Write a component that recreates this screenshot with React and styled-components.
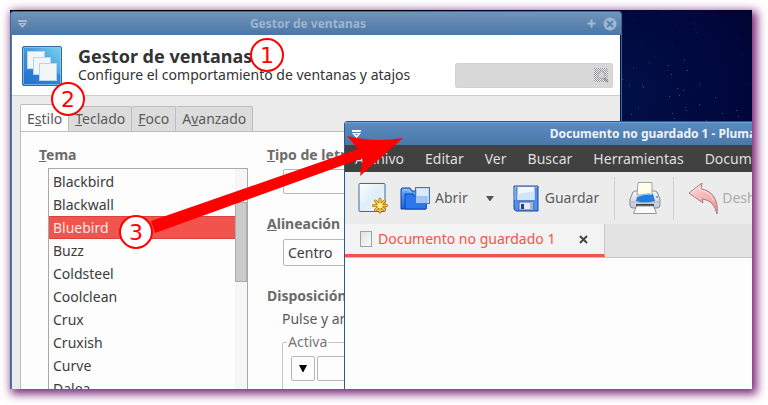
import React from "react";
import styled, { createGlobalStyle, css } from "styled-components";

const GlobalStyle = createGlobalStyle`
  *, *::before, *::after { box-sizing: border-box; }
  body {
    margin: 0;
    background: #fff;
    font-family: "Noto Sans", "Open Sans", sans-serif;
    font-size: 14px;
    line-height: 18px;
    color: #3c3c3c;
  }
  button, input { font: inherit; color: inherit; margin: 0; }
  h1, h2, p, ul { margin: 0; padding: 0; }
`;

/* ---------- Desktop ---------- */

const Page = styled.main`
  height: 100vh;
  padding: 10px 16px 16px 10px;
  overflow: hidden;
`;

const Desktop = styled.div`
  position: relative;
  height: 100%;
  overflow: hidden;
  background: radial-gradient(ellipse 260px 240px at 82% 22%, #001048 0%, #00063a 50%, #000020 80%, #000008 100%);
`;

const Shadow = styled.div`
  height: 100%;
  box-shadow: 3px 3px 9px 2px #7f2878;
`;

const Stars = styled.svg`
  position: absolute;
  top: 0;
  right: 0;
`;

const Annotations = styled.svg`
  position: absolute;
  inset: 0;
  width: 100%;
  height: 100%;
  pointer-events: none;
  font-family: "DejaVu Sans", sans-serif;
  font-size: 22px;
`;

/* ---------- Windows ---------- */

const Window = styled.section`
  position: absolute;
  display: flex;
  flex-direction: column;
  height: 460px;
  border: 1px solid #285a8e;
  border-radius: 3px 3px 0 0;
  overflow: hidden;
`;

const ManagerWindow = styled(Window)`
  top: 1px;
  left: 0;
  width: 612px;
  border-color: #3c6a9a;
  box-shadow: inset 1px 0 #4a7aad;
`;

const EditorWindow = styled(Window)`
  top: 111px;
  left: 334px;
  width: 634px;
  background: #fdfdfd;
`;

const TitleBar = styled.header`
  display: grid;
  grid-template-columns: 40px 1fr 58px;
  align-items: center;
  flex: none;
  height: 23px;
  padding: 0 4px 0 6px;
  font-size: 12px;
  font-weight: 700;
  text-align: center;
  ${({ $active }) =>
    $active
      ? css`
          color: #eef3f8;
          background: linear-gradient(#5a8bbf, #4a78a8);
          border-top: 1px solid #6ca2dc;
        `
      : css`
          color: #9db5cf;
          background: linear-gradient(#7294b9, #4a77a6);
        `}
`;

const WindowButtons = styled.div`
  display: flex;
  align-items: center;
  gap: 7px;
  justify-content: ${({ $end }) => ($end ? "flex-end" : "flex-start")};
`;

const IconButton = styled.button`
  display: inline-flex;
  align-items: center;
  justify-content: center;
  padding: 0;
  border: 0;
  background: none;
`;

const Heading = styled.div`
  display: flex;
  align-items: flex-start;
  flex: none;
  height: 61px;
  padding: 11px 7px 0 10px;
  margin: 0 1px;
  background: #fff;
  border-bottom: 1px solid #cdcdcd;
`;

const HeadingText = styled.div`
  flex: 1;
  padding-left: 16px;
  color: #333;
`;

const HeadingTitle = styled.h1`
  font-size: 18px;
  line-height: 20px;
`;

const SearchField = styled.label`
  display: flex;
  align-items: center;
  width: 158px;
  height: 25px;
  margin-top: 17px;
  padding: 0 3px;
  background: #d8d8d8;
  border: 1px solid #d2d2d2;
  border-radius: 2px;

  input {
    flex: 1;
    min-width: 0;
    border: 0;
    background: none;
    outline: none;
  }
`;

const Notebook = styled.div`
  display: flex;
  flex-direction: column;
  flex: 1;
  min-height: 0;
  margin: 0 1px;
  padding: 8px 8px 0;
  background: #ebebeb;
`;

const Tabs = styled.div`
  display: flex;
  align-items: flex-end;
`;

const Tab = styled.button`
  height: ${({ $selected }) => ($selected ? "28px" : "25px")};
  margin-bottom: ${({ $selected }) => ($selected ? "-1px" : "0")};
  padding: 0 6px;
  white-space: nowrap;
  color: #5a5a5a;
  background: ${({ $selected }) => ($selected ? "#fdfdfd" : "#dcdcdc")};
  border: 1px solid #bdbdbd;
  border-left-width: ${({ $first }) => ($first ? "1px" : "0")};
  border-bottom: 0;
  border-radius: 2px 2px 0 0;
`;

const TabPanel = styled.div`
  display: grid;
  grid-template-columns: 209px 1fr;
  gap: 19px;
  flex: 1;
  min-height: 0;
  padding: 13px 18px 0;
  background: #fdfdfd;
  border: 1px solid #bdbdbd;
`;

const Column = styled.div`
  display: flex;
  flex-direction: column;
  min-width: 0;
`;

const SectionTitle = styled.h2`
  font-size: 14px;
  line-height: 20px;
  color: #6b6b6b;
  white-space: nowrap;
`;

const ListBox = styled.div`
  display: flex;
  height: 300px;
  margin: 3px 0 0 9px;
  background: #fdfdfd;
  border: 1px solid #a9a9a9;
`;

const ThemeList = styled.ul`
  flex: 1;
  padding-top: 1px;
  list-style: none;
`;

const ThemeItem = styled.button`
  display: block;
  width: 100%;
  height: 23px;
  padding: 0 4px;
  text-align: left;
  border: solid ${({ $selected }) => ($selected ? "#d9423d" : "transparent")};
  border-width: 1px 0;
  line-height: 20px;
  color: ${({ $selected }) => ($selected ? "#fbe6e5" : "#3c3c3c")};
  background: ${({ $selected }) => ($selected ? "#f0544c" : "transparent")};
`;

const ScrollTrack = styled.div`
  width: 12px;
  padding-top: 33px;
  background: #f6f6f6;
`;

const ScrollThumb = styled.div`
  height: 80px;
  background: #cbcbcb;
  border: 1px solid #ababab;
`;

const Picker = styled.button`
  display: block;
  height: ${({ $tall }) => ($tall ? "27px" : "25px")};
  margin: ${({ $tall }) => ($tall ? "5px 0 20px 16px" : "4px 0 20px 16px")};
  padding: 0 4px;
  text-align: left;
  background: #fdfdfd;
  border: 1px solid #b7b7b7;
  border-radius: 2px;
`;

const Hint = styled.p`
  padding: 4px 0 0 15px;
  line-height: 18px;
  color: #5a5a5a;
`;

const ButtonLayout = styled.fieldset`
  display: flex;
  gap: 2px;
  height: 90px;
  margin: 5px 0 0 15px;
  padding: 5px 8px;
  color: #777;
  border: 1px solid #c4c4c4;
  border-radius: 2px;

  legend { padding: 0 1px; margin-left: -4px; }
`;

const LayoutButton = styled.button`
  display: flex;
  align-items: center;
  justify-content: center;
  width: ${({ $wide }) => ($wide ? "120px" : "24px")};
  height: 25px;
  padding: 0;
  background: #fdfdfd;
  border: 1px solid #b7b7b7;
  border-radius: 2px;
`;

const MenuBar = styled.nav`
  display: flex;
  gap: 21px;
  align-items: center;
  flex: none;
  height: 27px;
  padding: 0 10px;
  background: #414141;

  button {
    padding: 0;
    border: 0;
    background: none;
    color: #dfdfdf;
    white-space: nowrap;
  }
`;

const Toolbar = styled.div`
  display: flex;
  align-items: center;
  flex: none;
  height: 52px;
  padding: 0 13px;
  background: #ececec;
`;

const ToolButton = styled.button`
  display: flex;
  align-items: center;
  flex: none;
  gap: ${({ $gap }) => $gap || 6}px;
  margin-right: ${({ $after }) => $after || 0}px;
  padding: 0;
  border: 0;
  background: none;
  color: ${({ $muted }) => ($muted ? "#aaa" : "#5c5c5c")};
`;

const Divider = styled.span`
  flex: none;
  width: 1px;
  height: 43px;
  margin-right: ${({ $after }) => $after}px;
  background: #cfcfcf;
`;

const DocumentTabs = styled.div`
  display: flex;
  flex: none;
  height: 34px;
  background: #e3e3e3;
  border-bottom: 1px solid #c6c6c6;
`;

const DocumentTab = styled.div`
  display: flex;
  align-items: center;
  width: 260px;
  padding: 0 16px 0 15px;
  color: #f0544c;
  background: #f3f3f3;
  border-right: 1px solid #c9c9c9;
  border-bottom: 3px solid #f0544c;
`;

const DocumentName = styled.button`
  display: flex;
  align-items: center;
  gap: 6px;
  flex: 1;
  padding: 0;
  border: 0;
  background: none;
  white-space: nowrap;
`;

/* ---------- Icons ---------- */

const ShadeIcon = ({ color }) => (
  <svg width="12" height="10" viewBox="0 0 12 10">
    <path d="M1 1h9v2H1zM1 4h9L5.500 9zM4 5l1.500 1.500L7 5z" fill={color} fillRule="evenodd" />
  </svg>
);

const CloseRoundIcon = () => (
  <svg width="14" height="14" viewBox="0 0 14 14">
    <circle cx="7" cy="7" r="6.500" fill="#9eb8d3" />
    <path d="M4 4l6 6M10 4l-6 6" stroke="#5680ad" strokeWidth="2" />
  </svg>
);

const PlusIcon = () => (
  <svg width="9" height="9" viewBox="0 0 9 9">
    <path d="M4.500 0.500v8M0.500 4.500h8" stroke="#a3bbd4" strokeWidth="2" />
  </svg>
);

const WindowsIcon = () => (
  <svg width="40" height="40" viewBox="0 0 40 40">
    <defs>
      <linearGradient id="tile" x1="0" y1="1" x2="1" y2="0">
        <stop offset="0" stopColor="#2472d0" />
        <stop offset="0.500" stopColor="#3d98df" />
        <stop offset="1" stopColor="#7ed3ec" />
      </linearGradient>
    </defs>
    <rect x="0.500" y="0.500" width="39" height="39" rx="1.500" fill="url(#tile)" stroke="#34699c" />
    <path d="M1 26Q20 22 39 29V39H1z" fill="#1f6fd0" opacity=".5" />
    <rect x="1.500" y="1.500" width="37" height="37" rx="1" fill="none" stroke="#8ccff0" opacity=".7" />
    <g fill="#f3f6f9" stroke="#b7d6ee">
      <rect x="5.500" y="5.500" width="17" height="17" />
      <rect x="11.500" y="11.500" width="17" height="17" />
      <rect x="17.500" y="17.500" width="17" height="17" />
    </g>
  </svg>
);

const SearchIcon = () => (
  <svg width="15" height="15" viewBox="0 0 15 15">
    <defs>
      <pattern id="checks" width="2" height="2" patternUnits="userSpaceOnUse">
        <path d="M0 0h1v1H0zM1 1h1v1H1z" fill="#8d969e" />
      </pattern>
    </defs>
    <rect width="14" height="14" fill="#f0f0f0" />
    <rect width="14" height="14" fill="url(#checks)" shapeRendering="crispEdges" />
    <circle cx="7.500" cy="7" r="3.500" fill="#dcdcdc" fillOpacity=".6" stroke="#b0b0b0" />
    <path d="M10 10l4 4" stroke="#9b7d55" strokeWidth="1.500" />
  </svg>
);

const NewIcon = () => (
  <svg width="30" height="32" viewBox="0 0 30 32">
    <defs>
      <linearGradient id="sheet" x1="0" y1="0" x2="1" y2="1">
        <stop offset="0" stopColor="#fff" />
        <stop offset="0.500" stopColor="#deedf8" />
        <stop offset="1" stopColor="#fafdff" />
      </linearGradient>
    </defs>
    <rect x="1" y="1.500" width="26" height="28" rx="1" fill="url(#sheet)" stroke="#376e9f" />
    <g strokeLinecap="round">
      <path d="M22 17v13M15.500 23.500h13M17.500 19l9 9M26.500 19l-9 9" stroke="#b5681f" strokeWidth="3" />
      <path d="M22 17v13M15.500 23.500h13M17.500 19l9 9M26.500 19l-9 9" stroke="#ffd629" strokeWidth="1.500" />
    </g>
    <circle cx="22" cy="23.500" r="2.500" fill="#fff19a" />
  </svg>
);

const OpenIcon = () => (
  <svg width="31" height="25" viewBox="0 0 31 25">
    <defs>
      <linearGradient id="folder" x1="0" y1="0" x2="0" y2="1">
        <stop offset="0" stopColor="#6fb1ff" />
        <stop offset="1" stopColor="#1660e4" />
      </linearGradient>
    </defs>
    <path d="M1 3l1-1h8l2 3h14v18H1z" fill="url(#folder)" stroke="#173f91" />
    <path d="M5 23V8h8l2 3h12l-1 12z" fill="#2a77f0" stroke="#1146ac" />
    <path d="M3 4h6l2 3" fill="none" stroke="#a6d0ff" />
    <rect x="15.500" y="1.500" width="14" height="16" fill="#b6d4f6" fillOpacity=".85" stroke="#4577ac" />
    <rect x="17" y="3" width="11" height="7" fill="#e6f2fd" opacity=".8" />
  </svg>
);

const SaveIcon = () => (
  <svg width="26" height="27" viewBox="0 0 26 27">
    <path d="M1 1h24v25H3l-2-2z" fill="#4e90ef" stroke="#1a47a5" />
    <path d="M2 15V2h22" fill="none" stroke="#9fcbff" />
    <rect x="4" y="1.500" width="18" height="14" fill="#f2f7fc" stroke="#5a87c4" />
    <path d="M4.500 15V9l17-3v9z" fill="#d4e3f5" />
    <path d="M6 17h14v8H6z" fill="#e6e9f0" stroke="#4565a0" />
    <rect x="8" y="19" width="3" height="5" fill="#1c3f9b" />
    <path d="M17 17h3v8h-3z" fill="#a5b5d1" />
  </svg>
);

const PrintIcon = () => (
  <svg width="34" height="34" viewBox="0 0 34 34">
    <defs>
      <linearGradient id="printer" x1="0" y1="0" x2="0" y2="1">
        <stop offset="0" stopColor="#f6f6fb" />
        <stop offset="1" stopColor="#c6c7d6" />
      </linearGradient>
    </defs>
    <path d="M5 11Q6 10 8 10h18q2 0 3 1l3 7v6q0 3-3 3H5q-3 0-3-3v-6z" fill="url(#printer)" stroke="#85869a" />
    <path d="M10 1.500h14V14H9z" fill="#fffeea" stroke="#a5a59d" />
    <path d="M9 16q8-5 16-3l2 7q-10 3-19 0z" fill="#1f7fe0" />
    <path d="M10 15.500q7-3 14-2" stroke="#82c4fa" fill="none" />
    <path d="M3 21h6q8 2 16 0h6" stroke="#a5a6b6" fill="none" />
    <circle cx="29" cy="16" r="1" fill="#69a37c" />
    <path d="M8 24h18" stroke="#3e3e45" strokeWidth="2" />
    <path d="M8.500 25h17l3 7.500h-23z" fill="#fafafa" stroke="#9293a0" />
  </svg>
);

const UndoIcon = () => (
  <svg width="32" height="33" viewBox="0 0 32 33">
    <defs>
      <linearGradient id="undo" x1="0" y1="0" x2="1" y2="1">
        <stop offset="0" stopColor="#fdd9d9" />
        <stop offset="1" stopColor="#f29191" />
      </linearGradient>
    </defs>
    <path d="M1 11L14 1l-1 6C23 8 31 17 29 32C27 24 23 18 14 17l1 4z" fill="url(#undo)" stroke="#a77d7d" strokeLinejoin="round" />
    <path d="M3 11l9-7v4q9 1 14 11" fill="none" stroke="#feecec" />
  </svg>
);

const TriangleIcon = ({ color, width = 10, height = 6 }) => (
  <svg width={width} height={height} viewBox="0 0 10 6" preserveAspectRatio="none">
    <path d="M0 0h10L5.500 6h-1z" fill={color} />
  </svg>
);

const PageIcon = () => (
  <svg width="12" height="16" viewBox="0 0 12 16">
    <defs>
      <linearGradient id="page" x1="0" y1="0" x2="1" y2="1">
        <stop offset="0" stopColor="#e2e2e2" />
        <stop offset="1" stopColor="#fafafa" />
      </linearGradient>
    </defs>
    <rect x="0.500" y="0.500" width="11" height="15" fill="url(#page)" stroke="#a1a1a1" />
  </svg>
);

const CloseIcon = () => (
  <svg width="9" height="9" viewBox="0 0 9 9">
    <path d="M1 1l7 7M8 1L1 8" stroke="#454545" strokeWidth="2" />
  </svg>
);

/* ---------- Data ---------- */

const themes = ["Blackbird", "Blackwall", "Bluebird", "Buzz", "Coldsteel", "Coolclean", "Crux", "Cruxish", "Curve", "Dalea"];
const menus = ["Archivo", "Editar", "Ver", "Buscar", "Herramientas", "Documentos"];
const tabs = [
  ["E", "s", "tilo"],
  ["", "T", "eclado"],
  ["", "F", "oco"],
  ["A", "v", "anzado"],
];
const blueStars = [[10, 2], [12, 10], [42, 3], [56, 15], [59, 25], [75, 13], [75, 19], [76, 22], [93, 4], [98, 26], [118, 29], [21, 32], [42, 38], [58, 43], [81, 42], [52, 35], [121, 44], [127, 74]];
const tealStars = [[2, 69], [9, 75], [22, 75], [23, 77], [13, 57], [29, 52], [48, 55], [51, 64], [64, 50], [67, 60], [79, 74], [57, 78], [63, 80], [49, 86], [59, 85], [79, 94], [95, 87], [18, 97], [11, 104], [65, 97], [66, 100], [52, 103], [102, 103], [116, 100], [118, 106], [54, 108], [86, 110]];

const steps = [
  { n: 1, x: 257, y: 45 },
  { n: 2, x: 58, y: 89 },
  { n: 3, x: 126, y: 222 },
];

export default function App() {
  return (
    <>
      <GlobalStyle />
      <Page>
        <Shadow>
          <Desktop>
            <Stars width="132" height="112" aria-hidden="true">
              {blueStars.map(([x, y]) => (
                <rect key={`${x}-${y}`} x={x} y={y} width="1" height="1" fill="#10106e" />
              ))}
              {tealStars.map(([x, y]) => (
                <rect key={`${x}-${y}`} x={x} y={y} width="1" height="1" fill="#11667e" />
              ))}
            </Stars>

            <ManagerWindow>
              <TitleBar>
                <WindowButtons>
                  <IconButton aria-label="Enrollar"><ShadeIcon color="#a3bbd4" /></IconButton>
                </WindowButtons>
                <span>Gestor de ventanas</span>
                <WindowButtons $end>
                  <IconButton aria-label="Maximizar"><PlusIcon /></IconButton>
                  <IconButton aria-label="Cerrar"><CloseRoundIcon /></IconButton>
                </WindowButtons>
              </TitleBar>
              <Heading>
                <WindowsIcon />
                <HeadingText>
                  <HeadingTitle>Gestor de ventanas</HeadingTitle>
                  <p>Configure el comportamiento de ventanas y atajos</p>
                </HeadingText>
                <SearchField>
                  <input type="text" aria-label="Buscar" />
                  <SearchIcon />
                </SearchField>
              </Heading>
              <Notebook>
                <Tabs role="tablist">
                  {tabs.map(([before, key, after], i) => (
                    <Tab key={key} role="tab" aria-selected={i === 0} $selected={i === 0} $first={i === 0}>
                      {before}<u>{key}</u>{after}
                    </Tab>
                  ))}
                </Tabs>
                <TabPanel role="tabpanel">
                  <Column>
                    <SectionTitle><u>T</u>ema</SectionTitle>
                    <ListBox>
                      <ThemeList>
                        {themes.map((name) => (
                          <li key={name}>
                            <ThemeItem $selected={name === "Bluebird"}>{name}</ThemeItem>
                          </li>
                        ))}
                      </ThemeList>
                      <ScrollTrack><ScrollThumb /></ScrollTrack>
                    </ListBox>
                  </Column>
                  <Column>
                    <SectionTitle><u>T</u>ipo de letra</SectionTitle>
                    <Picker aria-label="Tipo de letra" />
                    <SectionTitle><u>A</u>lineación</SectionTitle>
                    <Picker $tall>Centro</Picker>
                    <SectionTitle>Disposición</SectionTitle>
                    <Hint>Pulse y arrastre</Hint>
                    <ButtonLayout>
                      <legend>Activa</legend>
                      <LayoutButton aria-label="Menú"><TriangleIcon color="#000" width={8} height={7} /></LayoutButton>
                      <LayoutButton $wide aria-label="Título" />
                    </ButtonLayout>
                  </Column>
                </TabPanel>
              </Notebook>
            </ManagerWindow>

            <EditorWindow>
              <TitleBar $active>
                <WindowButtons>
                  <IconButton aria-label="Enrollar"><ShadeIcon color="#fff" /></IconButton>
                </WindowButtons>
                <span>Documento no guardado 1 - Pluma</span>
                <WindowButtons $end />
              </TitleBar>
              <MenuBar>
                {menus.map((name) => (
                  <button key={name}>{name}</button>
                ))}
              </MenuBar>
              <Toolbar>
                <ToolButton $after={12} aria-label="Nuevo"><NewIcon /></ToolButton>
                <ToolButton $gap={4} $after={18}><OpenIcon />Abrir</ToolButton>
                <ToolButton $after={19} aria-label="Recientes"><TriangleIcon color="#555" width={8} height={5} /></ToolButton>
                <ToolButton $after={15}><SaveIcon />Guardar</ToolButton>
                <Divider $after={13} />
                <ToolButton $after={11} aria-label="Imprimir"><PrintIcon /></ToolButton>
                <Divider $after={14} />
                <ToolButton $muted $gap={2}><UndoIcon />Deshacer</ToolButton>
              </Toolbar>
              <DocumentTabs>
                <DocumentTab>
                  <DocumentName><PageIcon />Documento no guardado 1</DocumentName>
                  <IconButton aria-label="Cerrar documento"><CloseIcon /></IconButton>
                </DocumentTab>
              </DocumentTabs>
            </EditorWindow>

            <Annotations aria-hidden="true">
              <path d="M141 211L348 139L337 126Q365 133 393 128L350 166L353 148L145 223z" fill="#f00" />
              {steps.map(({ n, x, y }) => (
                <g key={n}>
                  <circle cx={x} cy={y} r="16" fill="#fff" stroke="#f00" strokeWidth="2" />
                  <text x={x} y={y + 8} textAnchor="middle" fill="#f00">{n}</text>
                </g>
              ))}
            </Annotations>
          </Desktop>
        </Shadow>
      </Page>
    </>
  );
}
